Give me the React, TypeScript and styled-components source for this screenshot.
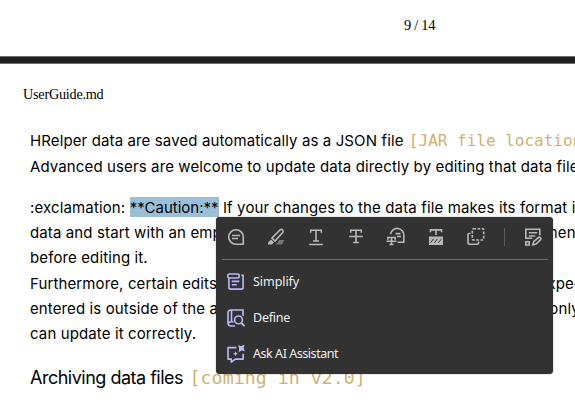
import React from "react";
import styled, { createGlobalStyle } from "styled-components";

const GlobalStyle = createGlobalStyle`
  * { box-sizing: border-box; }
  body { margin: 0; background: #fff; overflow: hidden; }
`;

const Viewer = styled.main`
  position: relative;
  width: 575px;
  height: 403px;
  overflow: hidden;
  background: #fff;
  color: #000;
`;

const PageEnd = styled.footer`
  height: 56px;
  padding: 17px 0 0 404px;
  font: 14.5px/17px "Liberation Serif", serif;
  letter-spacing: -0.3px;
`;

const PageGap = styled.div`
  height: 8px;
  background: #1e1e1e;
  border: solid #6d6d6d;
  border-width: 1px 0;
`;

const PageHeader = styled.header`
  height: 64px;
  padding: 22px 0 0 23px;
  font: 14.2px/17px "Liberation Serif", serif;
  letter-spacing: -0.22px;
`;

const Paragraph = styled.section`
  padding-left: 30px;
  font-family: Inter, sans-serif;
  font-size: 15px;
  & + & { margin-top: 16px; }
`;

const Line = styled.div<{ $spacing?: number; $height?: number }>`
  height: ${(p) => p.$height ?? 25}px;
  line-height: 25px;
  white-space: pre;
  letter-spacing: ${(p) => p.$spacing ?? 0.12}px;
`;

const Tail = styled.span<{ $shift: number }>`
  margin-left: ${(p) => p.$shift}px;
`;

const Heading = styled.h3`
  margin: 16px 0 0;
  padding-left: 30px;
  height: 32px;
  font: 400 18px/32px Inter, sans-serif;
  white-space: pre;
  letter-spacing: -0.5px;
`;

const Code = styled.code<{ $size: number; $gap: number }>`
  margin-left: ${(p) => p.$gap}px;
  font-family: "DejaVu Sans Mono", monospace;
  font-size: ${(p) => p.$size}px;
  line-height: 1;
  letter-spacing: 0;
  color: #d2b072;
`;

const Selection = styled.mark`
  display: inline-block;
  height: 20px;
  line-height: 22px;
  vertical-align: top;
  margin-top: 2px;
  background: #9ac0d9;
  color: inherit;
  letter-spacing: 0;
`;

const Menu = styled.aside`
  position: absolute;
  left: 216px;
  top: 217px;
  width: 337px;
  height: 157px;
  border-radius: 4px;
  background: #323232;
  box-shadow: 0 0 1px #222;
`;

const Toolbar = styled.div`
  display: flex;
  align-items: center;
  height: 43px;
  margin: 0 5px 0 6px;
  padding-left: 4px;
  gap: 20px;
  border-bottom: 1px solid #6e6e6e;
`;

const Tool = styled.button`
  display: block;
  width: 20px;
  height: 20px;
  padding: 0;
  margin-bottom: 2px;
  border: 0;
  background: none;
  color: #b9b9b9;
  svg { display: block; }
`;

const Divider = styled.span`
  width: 1px;
  height: 18px;
  margin: 0 -2px 2px -2px;
  background: #5d5d5d;
`;

const Actions = styled.div`
  padding-top: 4px;
`;

const Action = styled.button<{ $spacing: number }>`
  display: flex;
  align-items: center;
  gap: 7px;
  width: 100%;
  height: 36px;
  padding: 0 0 0 10px;
  border: 0;
  background: none;
  color: #efefef;
  font: 12.5px/18px "Noto Sans", sans-serif;
  letter-spacing: ${(p) => p.$spacing}px;
  svg { color: #b9b9f9; }
`;

const Icon = ({ children }: { children: React.ReactNode }) => (
  <svg width="20" height="20" viewBox="0 0 20 20" fill="none" stroke="currentColor" strokeWidth="1.6">
    {children}
  </svg>
);

const CommentIcon = () => (
  <Icon>
    <path d="M17.3 17.3H10A7.3 7.3 0 1 1 17.3 10z" strokeLinejoin="round" />
    <path d="M6 8.5h8M6 11.5h6" />
  </Icon>
);

const HighlightIcon = () => (
  <Icon>
    <path d="M10 17.5 13.5 13h5l-2.7 4.5z" fill="#777" stroke="none" />
    <path d="m6 11 8.3-8.3q1.2-.8 2.3.3t.3 2.3L9 14z" />
    <path d="m5 12.5 3 3-2 2H2v-1.8z" fill="currentColor" stroke="none" />
  </Icon>
);

const UnderlineIcon = () => (
  <Icon>
    <path d="M4.7 5.8V3.2h10.6v2.6M10 3.2v10.6M7 14h6M3.2 17.5h13.6" />
  </Icon>
);

const StrikeIcon = () => (
  <Icon>
    <path d="M4.7 5.8V3.2h10.6v2.6M10 3.2v12.3M7.2 15.5h5.6M3.2 9.5h13.6" />
  </Icon>
);

const ReplaceTextIcon = () => (
  <Icon>
    <path d="M4.5 7.2A6.6 6.6 0 0 1 17.8 9v6.3h-6.2M9.5 6.6h5M11 9.5h4" />
    <path d="M1.8 12.8v-2.3h7.4v2.3M5.5 10.5v7M3.5 17.5h4M.5 14.3h10" />
  </Icon>
);

const RedactIcon = () => (
  <Icon>
    <path d="M4.5 5.3V2.9h11v2.4M10 2.9V8" />
    <path d="M3 9.5h14V18H3z" fill="currentColor" stroke="none" />
    <path d="m4.6 15.7 3-3.9m.9 3.9 3-3.9m1 3.9 3-3.9" stroke="#323232" strokeWidth="1" />
  </Icon>
);

const CopyAreaIcon = () => (
  <Icon>
    <path d="M4.5 6.5H3.1Q2 6.5 2 7.7v8.4q0 1.2 1.2 1.2h8.2q1.2 0 1.2-1.2v-1.7" />
    <rect x="6.3" y="1.8" width="11.4" height="11.2" rx="1" strokeDasharray="2.7 1.5" />
  </Icon>
);

const FormIcon = () => (
  <Icon>
    <path d="M2.8 12V2.3h14v6M5.8 5.8h8.4M5.8 9h6.5M2.8 11.3h6.5M2.8 14.7h3.4V18H2.8z" />
    <path d="m9.8 17.9.8-3.2 5.4-4.6q2.4.4 1.7 2.5L13 17.1z" />
  </Icon>
);

const SimplifyIcon = () => (
  <Icon>
    <rect x="1.8" y="2" width="11.4" height="4" rx="1.6" />
    <path d="M15.3 3.2h1.8v12.2q0 1.7-1.7 1.7H4.6q-1.7 0-1.7-1.7V6M5.8 9.4h7.5M5.8 12.8h5" />
  </Icon>
);

const DefineIcon = () => (
  <Icon>
    <path d="M17 8V2H5Q2 2 2 5v9.5Q2 18 5 18h4M5.5 2v11.7Q2 13.8 2 16M5.5 13.7h2" />
    <circle cx="12.5" cy="11.9" r="3.9" />
    <path d="m15.4 15 3.2 3.2" strokeWidth="1.8" />
  </Icon>
);

const AssistantIcon = () => (
  <Icon>
    <path d="M10.5 3.6H2v11.5h3.3v3l4-3h7.9V9.8" strokeLinejoin="round" />
    <path d="m12.4 1 2.6 1.2L18.6.6 17.6 4l1.3 3.2-3.3-.7-2.9 1.7.4-3.3zM9.5 7.2l.8 1.7 1.7.8-1.7.8-.8 1.7-.8-1.7-1.7-.8 1.7-.8z" fill="currentColor" stroke="none" />
  </Icon>
);

const tools = [
  { name: "Comment", Glyph: CommentIcon },
  { name: "Highlight", Glyph: HighlightIcon },
  { name: "Underline", Glyph: UnderlineIcon },
  { name: "Strikethrough", Glyph: StrikeIcon },
  { name: "Replace text", Glyph: ReplaceTextIcon },
  { name: "Redact", Glyph: RedactIcon },
  { name: "Copy area", Glyph: CopyAreaIcon },
];

const actions = [
  { label: "Simplify", spacing: -0.05, Glyph: SimplifyIcon },
  { label: "Define", spacing: -0.25, Glyph: DefineIcon },
  { label: "Ask AI Assistant", spacing: -0.45, Glyph: AssistantIcon },
];

export default function App() {
  return (
    <Viewer>
      <GlobalStyle />
      <PageEnd>9 / 14</PageEnd>
      <PageGap />
      <PageHeader>UserGuide.md</PageHeader>
      <Paragraph>
        <Line $height={26}>
          HRelper data are saved automatically as a JSON file <Code $size={16} $gap={1}>[JAR file location</Code>
        </Line>
        <Line>Advanced users are welcome to update data directly by editing that data file</Line>
      </Paragraph>
      <Paragraph>
        <Line $spacing={0.14}>
          :exclamation: <Selection>**Caution:**</Selection> If your changes to the data file makes its format i
        </Line>
        <Line>data and start with an empty data file at the next run. Hence, it is <Tail $shift={-1}>recommended</Tail></Line>
        <Line $height={26}>before editing it.</Line>
        <Line>Furthermore, certain edits can cause the HRelper to behave in <Tail $shift={40}>unexpected</Tail></Line>
        <Line>entered is outside of the acceptable range). Therefore, edit the <Tail $shift={0}>data file only</Tail></Line>
        <Line>can update it correctly.</Line>
      </Paragraph>
      <Heading>
        Archiving data files <Code $size={18.3} $gap={2}>[coming in v2.0]</Code>
      </Heading>
      <Menu>
        <Toolbar>
          {tools.map(({ name, Glyph }) => (
            <Tool key={name} aria-label={name}>
              <Glyph />
            </Tool>
          ))}
          <Divider />
          <Tool aria-label="Fill form">
            <FormIcon />
          </Tool>
        </Toolbar>
        <Actions>
          {actions.map(({ label, spacing, Glyph }) => (
            <Action key={label} $spacing={spacing}>
              <Glyph />
              {label}
            </Action>
          ))}
        </Actions>
      </Menu>
    </Viewer>
  );
}
